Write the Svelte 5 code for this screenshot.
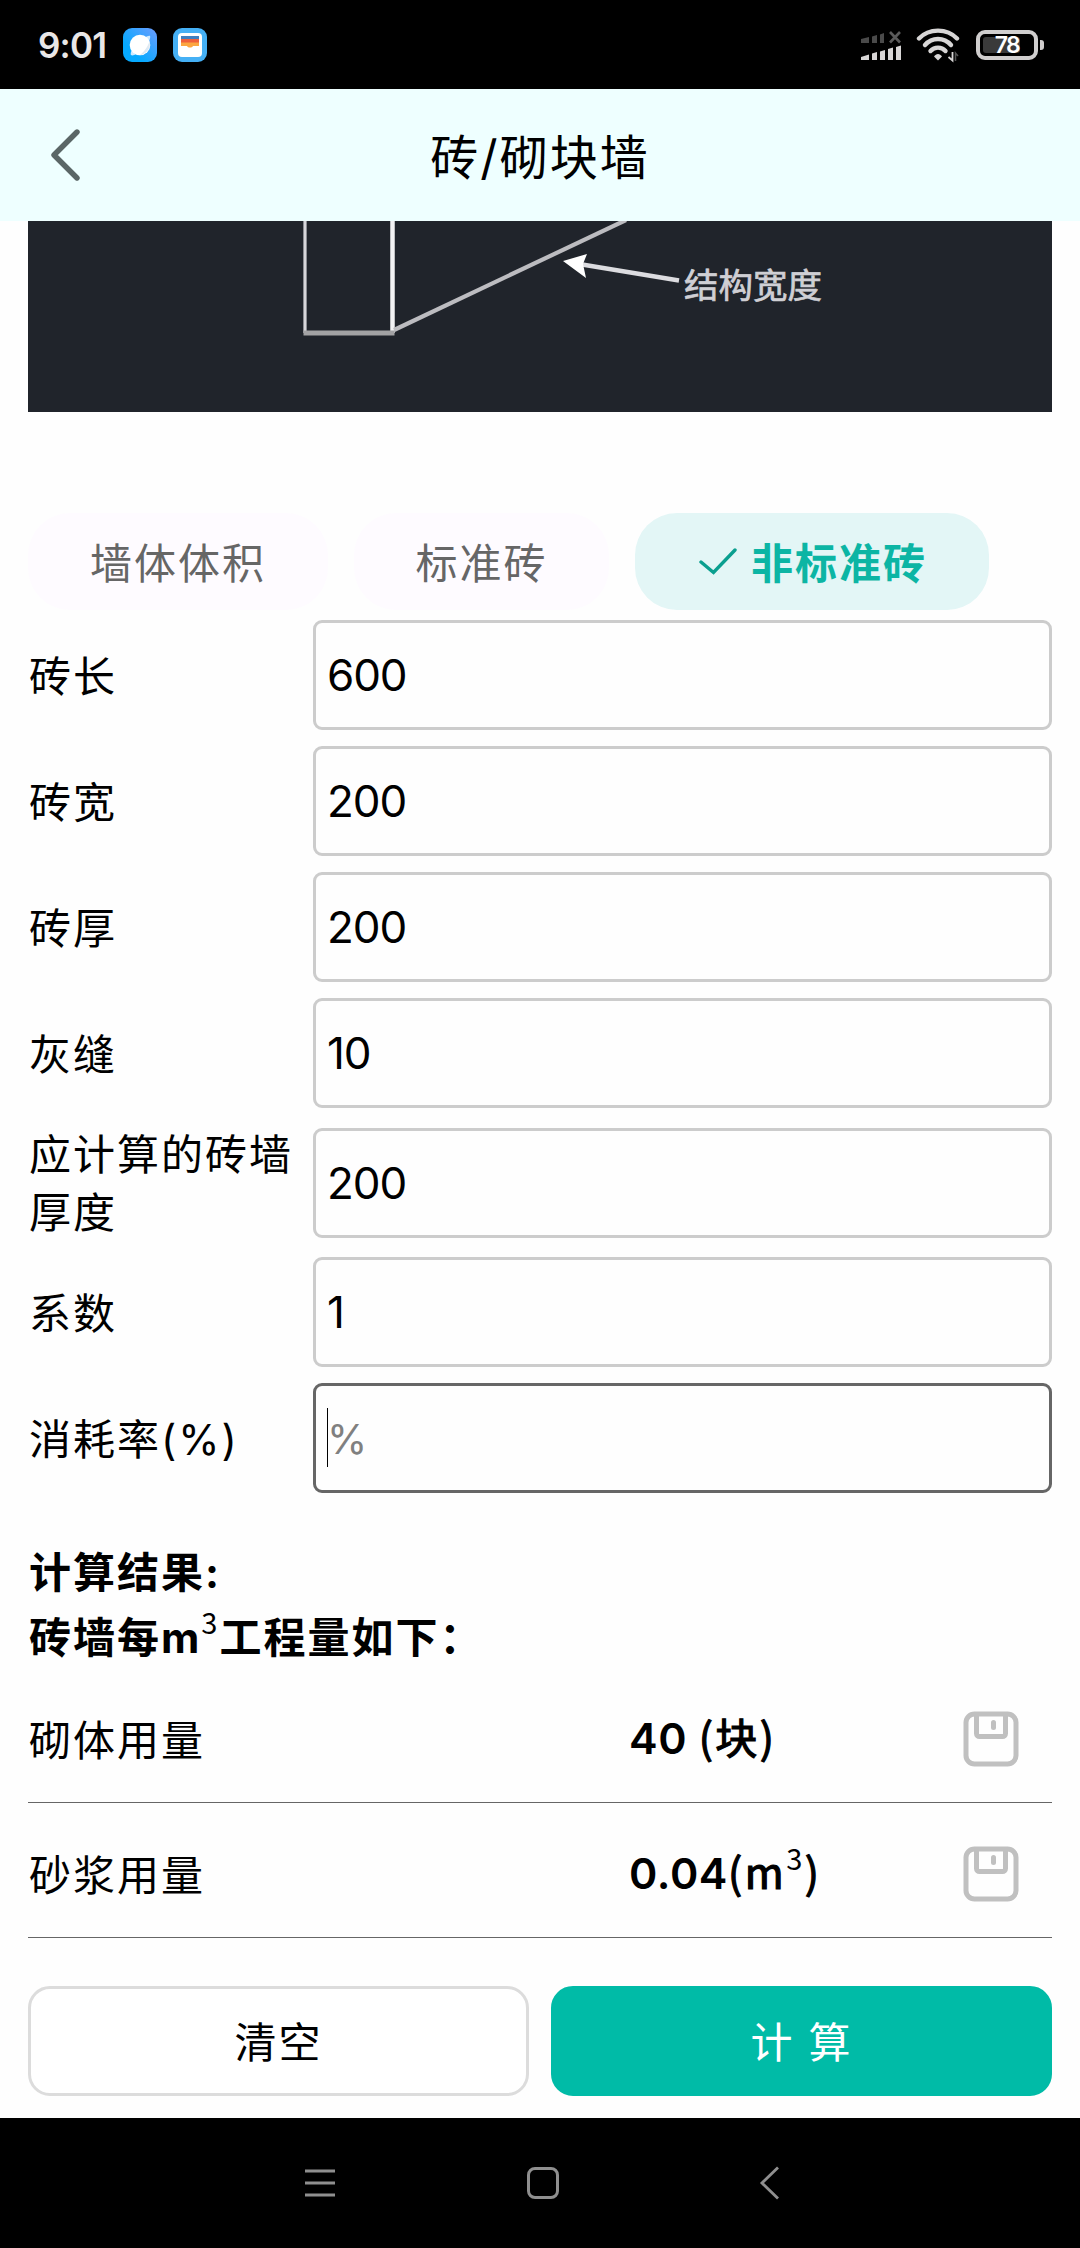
<script lang="ts">
  interface Field {
    label: string;
    value: string;
    placeholder?: string;
    focused?: boolean;
  }

  const tabs = ["墙体体积", "标准砖", "非标准砖"];
  let active = $state(2);

  let fields: Field[] = $state([
    { label: "砖长", value: "600" },
    { label: "砖宽", value: "200" },
    { label: "砖厚", value: "200" },
    { label: "灰缝", value: "10" },
    { label: "应计算的砖墙厚度", value: "200" },
    { label: "系数", value: "1" },
    { label: "消耗率(%)", value: "", placeholder: "%", focused: true },
  ]);

  const results = [
    { name: "砌体用量", amount: "40 ", unit: "块", power: "" },
    { name: "砂浆用量", amount: "0.04", unit: "m", power: "3" },
  ];

  function clearAll() {
    for (const f of fields) f.value = "";
  }
</script>

<div class="screen">
  <div class="status">
    <span class="time">9:01</span>
    <svg class="app" viewBox="0 0 34 34">
      <defs>
        <linearGradient id="planet" x1="0" y1="1" x2="1" y2="0">
          <stop offset="0.3" stop-color="#06a9ff" />
          <stop offset="1" stop-color="#6d9cff" />
        </linearGradient>
      </defs>
      <rect width="34" height="34" rx="9" fill="url(#planet)" />
      <path d="M8 27c-1.500-1.500 2-9 7-13s11-7.500 12-6-1.500 8-7 13-10.500 7.500-12 6z" fill="#cfeaff" />
      <circle cx="17" cy="17" r="10.300" fill="#fff" />
      <path d="M26.500 13.500c2 6-3 13-10 13.700 4-2.500 8-8 10-13.700z" fill="#dfe9f2" />
    </svg>
    <svg class="app second" viewBox="0 0 34 34">
      <rect width="34" height="34" rx="9" fill="#45b0f5" />
      <rect x="5" y="5" width="24" height="24" rx="4" fill="#fff" />
      <rect x="8" y="8" width="18" height="4.500" fill="#3f7fc0" />
      <rect x="8" y="11" width="18" height="4" fill="#f0603c" />
      <path d="M8 14.500h18V18h-6c-1 2-5 2-6 0H8z" fill="#fca640" />
    </svg>
    <span class="grow"></span>
    <svg class="signal" viewBox="0 0 42 34" width="42" height="34">
      <g fill="#4a4a4a">
        <path d="M1 11l8-2v6H1z" />
        <path d="M12 8.500l5-1.500v8h-5z" />
        <path d="M20 6.500l4-1.500v10h-4z" />
      </g>
      <path d="M30 4l10 10.500M40 4L30 14.500" stroke="#5a5a5a" stroke-width="2.600" />
      <g fill="#d8d6d6">
        <path d="M1 29l8-2.500V32H1z" />
        <path d="M12 25.500l5-1.500v8h-5z" />
        <path d="M20 23.500l5-1.500v10h-5z" />
        <path d="M28 21l5-1.500V32h-5z" />
        <path d="M36 19l5-1.500V32h-5z" />
      </g>
    </svg>
    <svg class="wifi" viewBox="0 0 44 36" width="44" height="36">
      <g fill="none" stroke="#d8d6d6" stroke-width="4.400" stroke-linecap="round">
        <path d="M3 11.500C13 1 31 1 41 11.500" />
        <path d="M9 18c7-8 19-8 26 0" />
        <path d="M14.500 24c4-4.500 11-4.500 15 0" />
      </g>
      <path d="M18 29.500c2-3.500 6-3.500 8 0L22 33.500z" fill="#d8d6d6" />
      <path d="M36.500 25v8.500l-4-3.500" fill="none" stroke="#d8d6d6" stroke-width="1.800" />
      <path d="M39.500 34v-8l2.500 3" fill="none" stroke="#555" stroke-width="1.500" />
    </svg>
    <div class="battery">
      <span class="level"></span>
      <span class="pct">78</span>
    </div>
    <span class="nub"></span>
  </div>

  <header class="hd">
    <button type="button" class="back" aria-label="返回">
      <svg viewBox="0 0 30 52" width="30" height="52">
        <path d="M26 3L3 26l23 23" fill="none" stroke="#5a6666" stroke-width="5.400" stroke-linecap="round" stroke-linejoin="round" />
      </svg>
    </button>
    <h1>砖/砌块墙</h1>
  </header>

  <main>
    <!-- lower part of the wall diagram, the rest is scrolled under the header -->
    <svg class="figure" viewBox="0 0 1024 191" width="1024" height="191">
      <rect width="1024" height="191" fill="#20242b" />
      <g fill="none" stroke="#d6d6da" stroke-width="3">
        <path d="M277 0v112" stroke-width="3.200" />
        <path d="M364.500 0v112" stroke="#f2f2f4" stroke-width="4.500" />
        <path d="M275.500 112h91" stroke="#a2a2a4" stroke-width="5" />
        <path d="M366 109L598 -1" stroke="#bcbcc0" stroke-width="4.200" />
        <path d="M548 42.500L651 59.500" stroke="#dcdce0" stroke-width="4.500" />
      </g>
      <path d="M535 40l24-7-4 10 3 14z" fill="#fff" />
      <text x="656" y="77" font-size="34.500" fill="#cfcfd4" stroke="#cfcfd4" stroke-width="0.700">结构宽度</text>
    </svg>

    <div class="tabs">
      {#each tabs as tab, i}
        <button type="button" class="tab" class:on={i === active} onclick={() => (active = i)}>
          {#if i === active}
            <svg viewBox="0 0 40 30" width="40" height="30">
              <path d="M4 15l12.500 10.500L38 3" fill="none" stroke="#0a9f8f" stroke-width="3.400" stroke-linecap="round" stroke-linejoin="miter" />
            </svg>
          {/if}
          <span>{tab}</span>
        </button>
      {/each}
    </div>

    <div class="form">
      {#each fields as f}
        <label class="row">
          <span class="lab">{f.label}</span>
          <span class="box" class:focused={f.focused}>
            {#if f.focused}<i class="caret"></i>{/if}
            <input type="text" bind:value={f.value} placeholder={f.placeholder ?? ""} />
          </span>
        </label>
      {/each}
    </div>

    <section class="sum">
      <p>计算结果:</p>
      <p>砖墙每m<sup>3</sup>工程量如下：</p>
    </section>

    {#each results as r}
      <div class="result">
        <span class="name">{r.name}</span>
        <span class="amount">{r.amount}<span class="unit">({r.unit}{#if r.power}<sup>{r.power}</sup>{/if})</span></span>
        <svg viewBox="0 0 56 56" width="56" height="56">
          <g fill="none" stroke="#c0c0c0" stroke-width="5">
            <rect x="3" y="3" width="50" height="50" rx="8.500" />
            <path d="M13.500 4v18.500a3 3 0 0 0 3 3h23a3 3 0 0 0 3-3V4" />
            <path d="M30.500 11.500v5" stroke-linecap="round" />
          </g>
        </svg>
      </div>
    {/each}

    <div class="actions">
      <button type="button" class="btn" onclick={clearAll}>清空</button>
      <button type="button" class="btn primary">计 算</button>
    </div>
  </main>

  <nav class="sysnav">
    <svg viewBox="0 0 34 36" width="34" height="36">
      <path d="M2 6h30M2 18h30M2 30h30" stroke="#8f8f8f" stroke-width="3" />
    </svg>
    <svg viewBox="0 0 34 36" width="34" height="36">
      <rect x="2.500" y="3.500" width="29" height="29" rx="6.500" fill="none" stroke="#8f8f8f" stroke-width="3" />
    </svg>
    <svg viewBox="0 0 34 36" width="34" height="36">
      <path d="M29 2.500L13 18l16 15.500" fill="none" stroke="#8f8f8f" stroke-width="2.800" />
    </svg>
  </nav>
</div>

<style>
  :global(body) {
    margin: 0;
    background: #fff;
  }

  .screen {
    width: 1080px;
    height: 2248px;
    overflow: hidden;
    display: flex;
    flex-direction: column;
    background: #fefefe;
    color: #000;
    font-family: Inter, "Noto Sans CJK SC", sans-serif;
    font-size: 42px;
    letter-spacing: 2px;
  }

  svg {
    display: block;
    flex: none;
  }

  button {
    font: inherit;
    letter-spacing: inherit;
    color: inherit;
    cursor: pointer;
  }

  .status {
    box-sizing: border-box;
    flex: none;
    height: 89px;
    padding: 0 36px 0 38px;
    display: flex;
    align-items: center;
    background: #000;
    color: #e9e7e7;
  }

  .time {
    width: 85px;
    font-size: 35px;
    font-weight: 600;
    letter-spacing: -0.8px;
  }

  .app {
    width: 34px;
    height: 34px;
  }

  .second {
    margin-left: 16px;
  }

  .grow {
    flex: 1;
  }

  .signal {
    margin-right: 14px;
  }

  .wifi {
    margin-right: 16px;
  }

  .battery {
    box-sizing: border-box;
    width: 62px;
    height: 30px;
    border: 4px solid #d0cece;
    border-radius: 9px;
    position: relative;
    display: flex;
    align-items: center;
    justify-content: center;
  }

  .level {
    position: absolute;
    left: 3px;
    top: 3px;
    width: 37px;
    height: 16px;
    border-radius: 3px;
    background: #3a3a3a;
  }

  .pct {
    position: relative;
    font-size: 23px;
    line-height: 22px;
    font-weight: 600;
    letter-spacing: -1.5px;
    color: #fff;
  }

  .nub {
    width: 4px;
    height: 10px;
    margin-left: 2px;
    border-radius: 0 3px 3px 0;
    background: #d0cece;
  }

  .hd {
    flex: none;
    height: 132px;
    display: grid;
    grid-template-columns: 132px 1fr 132px;
    align-items: center;
    background: #eeffff;
  }

  .back {
    margin-left: 51px;
    padding: 0;
    border: none;
    background: none;
    width: 30px;
  }

  .hd h1 {
    margin: 0;
    padding-bottom: 2px;
    text-align: center;
    font-size: 48px;
    font-weight: 400;
  }

  main {
    flex: 1;
    padding: 0 28px;
    display: flex;
    flex-direction: column;
  }

  .figure {
    letter-spacing: 0;
  }

  .tabs {
    margin-top: 101px;
    display: flex;
    gap: 26px;
  }

  .tab {
    box-sizing: border-box;
    height: 97px;
    padding: 0 61.5px 0 62px;
    border: none;
    border-radius: 42px;
    display: flex;
    align-items: center;
    gap: 14px;
    background: #fefbff;
    color: #666;
  }

  .tab span {
    padding-bottom: 2px;
  }

  .tab.on {
    background: #e3f6f6;
    color: #0cb5a4;
    font-weight: 700;
  }

  .form {
    margin-top: 2px;
  }

  .row {
    box-sizing: border-box;
    min-height: 126px;
    padding: 8px 0;
    display: flex;
    align-items: center;
  }

  .lab {
    width: 285px;
    margin-bottom: -1px;
    padding: 2px 0 0 1px;
    box-sizing: border-box;
    line-height: 58px;
  }

  .box {
    box-sizing: border-box;
    flex: 1;
    height: 110px;
    border: 3px solid #ccc;
    border-radius: 9px;
    padding: 0 11px;
    position: relative;
    display: flex;
    align-items: center;
  }

  .box.focused {
    border-color: #666;
  }

  .box input {
    width: 100%;
    padding: 0;
    border: none;
    outline: none;
    background: transparent;
    font: inherit;
    font-size: 44px;
    letter-spacing: -1.1px;
    color: #000;
  }

  .box input::placeholder {
    font-size: 41px;
    color: #808080;
    opacity: 1;
  }

  .caret {
    position: absolute;
    left: 11px;
    top: 22px;
    width: 1px;
    height: 59px;
    background: #000;
  }

  .sum {
    margin-top: 39px;
    height: 128px;
    padding-left: 1px;
    font-weight: 700;
  }

  .sum p {
    margin: 0;
    line-height: 65px;
  }

  sup {
    font-family: "Noto Sans CJK SC", sans-serif;
    font-size: 29px;
    font-weight: 400;
    line-height: 0;
    vertical-align: 19px;
    -webkit-text-stroke: 0;
  }

  .result {
    box-sizing: border-box;
    height: 135px;
    padding: 8px 33px 0 1px;
    border-bottom: 1px solid #666;
    display: flex;
    align-items: center;
  }

  .name {
    width: 600px;
    padding-bottom: 4px;
  }

  .amount {
    flex: 1;
    padding-bottom: 4px;
    font-size: 43px;
    font-weight: 600;
    line-height: 60px;
    letter-spacing: 0.6px;
    white-space: pre;
  }

  /* no medium cut of the CJK face, a thin stroke stands in for it */
  .unit {
    font-family: "Noto Sans CJK SC", sans-serif;
    font-size: 42px;
    font-weight: 400;
    letter-spacing: 2.5px;
    -webkit-text-stroke: 1.2px #000;
  }

  .actions {
    margin-top: 48px;
    display: flex;
    gap: 22px;
  }

  .btn {
    box-sizing: border-box;
    flex: 1;
    height: 110px;
    padding: 0 0 4px;
    border: 3px solid #dcdcdc;
    border-radius: 22px;
    background: #fff;
  }

  .btn.primary {
    border-color: #00bba7;
    background: #00bba7;
    color: #fff;
  }

  .sysnav {
    flex: none;
    height: 130px;
    padding: 0 0 1px 6px;
    box-sizing: border-box;
    display: flex;
    justify-content: center;
    align-items: center;
    gap: 189px;
    background: #000;
  }
</style>
